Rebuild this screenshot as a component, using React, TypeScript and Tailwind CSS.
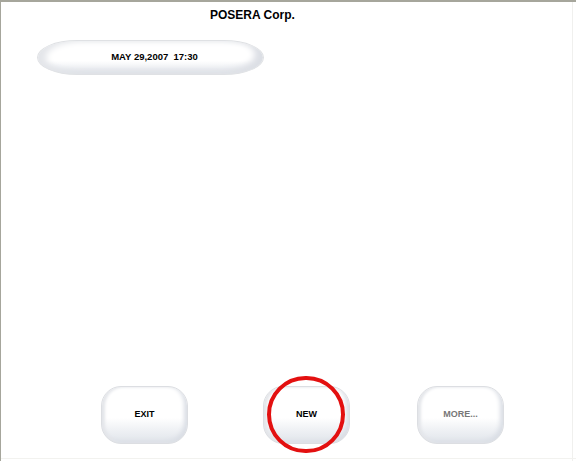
import React from "react";

const font = { fontFamily: '"Liberation Sans", Arial, sans-serif' };

function Btn({ label, dim }: { label: string; dim?: boolean }) {
  return (
    <div className="w-[87px] h-[58px] rounded-[20px] border border-[#dcdee2] bg-[linear-gradient(to_bottom,#ffffff_0%,#ffffff_55%,#f0f2f5_75%,#e0e4ea_100%)] shadow-[inset_3px_0_3px_#e4e6ea,inset_-3px_-2px_4px_#dadee5] flex items-center justify-center">
      <span className={`text-[9px] font-bold ${dim ? "text-[#777777]" : "text-black"}`}>{label}</span>
    </div>
  );
}

export default function App() {
  return (
    <div style={font} className="w-[576px] h-[461px] bg-white border-t-2 border-l border-[#a6a69c] relative overflow-hidden flex flex-col">
      <div className="absolute right-[3px] top-0 bottom-0 w-px bg-[#f0f0ee]" />
      <div className="absolute left-0 right-0 bottom-[2px] h-px bg-[#f2f2ef]" />
      <div className="pl-[209px] pt-[6px] h-[20px] text-[12px] font-bold text-black leading-[14px]">POSERA Corp.</div>
      <div className="pl-[36px] pt-[18px]">
        <div className="w-[227px] h-[35px] rounded-[40px/17.5px] border border-[#dfe1e4] bg-[linear-gradient(to_bottom,#ffffff_0%,#ffffff_60%,#f0f2f5_80%,#e2e5ea_100%)] shadow-[inset_8px_0_6px_#e4e6ea,inset_-8px_-3px_6px_#dcdfe5] flex items-center justify-center">
          <span className="text-[9.5px] font-bold text-black whitespace-pre pl-[8px]">MAY 29,2007  17:30</span>
        </div>
      </div>
      <div className="flex-1" />
      <div className="flex pl-[100px] pb-[17px]">
        <Btn label="EXIT" />
        <div className="relative ml-[75px]">
          <Btn label="NEW" />
          <div className="absolute left-[4px] top-[-10px] w-[78px] h-[77px] rounded-full border-[4px] border-[#e31010]" />
        </div>
        <div className="ml-[67px]">
          <Btn label="MORE..." dim />
        </div>
      </div>
    </div>
  );
}
